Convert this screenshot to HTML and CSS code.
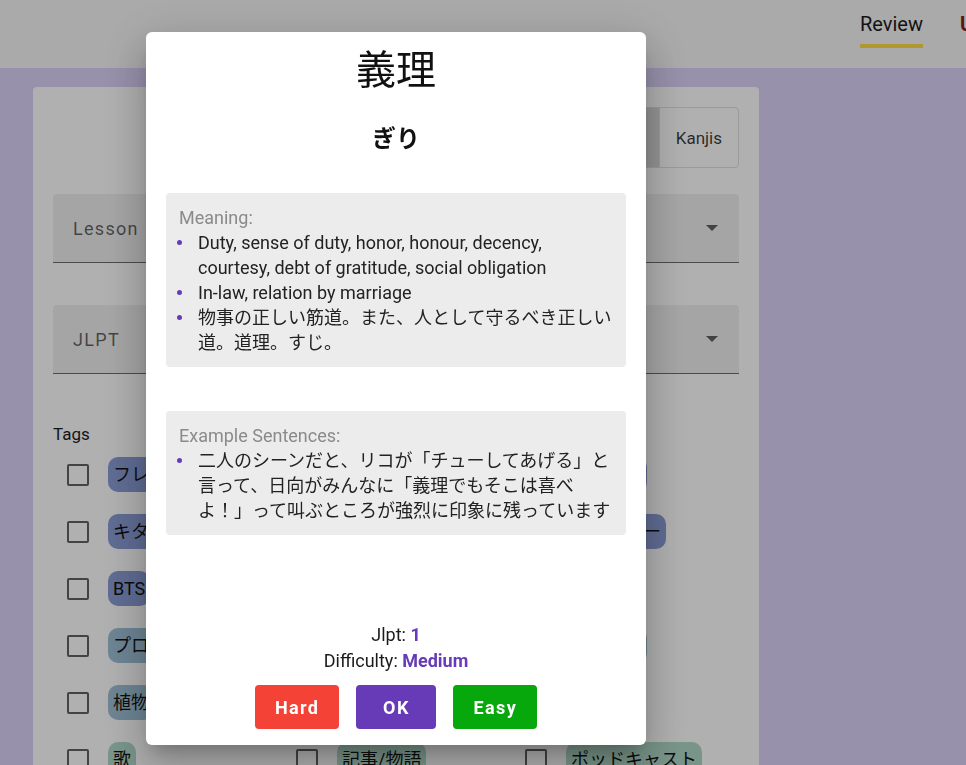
FILE: index.html
```html
<!DOCTYPE html>
<html lang="ja">
<head>
<meta charset="utf-8">
<title>Review</title>
<link rel="stylesheet" href="styles.css">
</head>
<body>
<header class="topbar">
  <nav class="tabs">
    <span class="tab tab-active">Review</span>
    <span class="tab tab-alt">Upload</span>
  </nav>
</header>

<main class="content">
  <section class="panel">
    <div class="toggle-row">
      <div class="toggle-group">
        <span class="toggle">All</span>
        <span class="toggle toggle-selected">Words</span>
        <span class="toggle">Kanjis</span>
      </div>
    </div>

    <div class="select select-first">
      <span class="select-label">Lesson</span>
      <span class="select-arrow"></span>
    </div>
    <div class="select select-second">
      <span class="select-label">JLPT</span>
      <span class="select-arrow"></span>
    </div>

    <div class="tags-title">Tags</div>
    <div class="tags-grid">
      <div class="tag"><span class="checkbox"></span><span class="chip chip-blue">フレーズ</span></div>
      <div class="tag"><span class="checkbox"></span><span class="chip chip-blue">アニメ</span></div>
      <div class="tag"><span class="checkbox"></span><span class="chip chip-blue">ニュース</span></div>

      <div class="tag"><span class="checkbox"></span><span class="chip chip-blue">キタニタツヤ</span></div>
      <div class="tag"><span class="checkbox"></span><span class="chip chip-blue">ドラマ</span></div>
      <div class="tag"><span class="checkbox"></span><span class="chip chip-blue">カレンダー</span></div>

      <div class="tag"><span class="checkbox"></span><span class="chip chip-blue">BTS</span></div>
      <div class="tag"><span class="checkbox"></span><span class="chip chip-blue">映画</span></div>
      <div class="tag"><span class="checkbox"></span><span class="chip chip-blue">音楽</span></div>

      <div class="tag"><span class="checkbox"></span><span class="chip chip-steel">プログラミング</span></div>
      <div class="tag"><span class="checkbox"></span><span class="chip chip-steel">料理</span></div>
      <div class="tag"><span class="checkbox"></span><span class="chip chip-steel">ゲーム系</span></div>

      <div class="tag"><span class="checkbox"></span><span class="chip chip-steel">植物</span></div>
      <div class="tag"><span class="checkbox"></span><span class="chip chip-steel">動物</span></div>
      <div class="tag"><span class="checkbox"></span><span class="chip chip-steel">旅行</span></div>

      <div class="tag"><span class="checkbox"></span><span class="chip chip-green">歌</span></div>
      <div class="tag"><span class="checkbox"></span><span class="chip chip-green">記事/物語</span></div>
      <div class="tag"><span class="checkbox"></span><span class="chip chip-green">ポッドキャスト</span></div>
    </div>
  </section>
</main>

<div class="backdrop"></div>

<div class="dialog">
  <div class="word">義理</div>
  <div class="reading">ぎり</div>

  <div class="info-box">
    <div class="box-title">Meaning:</div>
    <ul class="info-list">
      <li>Duty, sense of duty, honor, honour, decency, courtesy, debt of gratitude, social obligation</li>
      <li>In-law, relation by marriage</li>
      <li>物事の正しい筋道。また、人として守るべき正しい道。道理。すじ。</li>
    </ul>
  </div>

  <div class="info-box info-box-examples">
    <div class="box-title">Example Sentences:</div>
    <ul class="info-list">
      <li>二人のシーンだと、リコが「チューしてあげる」と言って、日向がみんなに「義理でもそこは喜べよ！」って叫ぶところが強烈に印象に残っています</li>
    </ul>
  </div>

  <div class="dialog-footer">
    <div class="meta">Jlpt: <b class="meta-value">1</b></div>
    <div class="meta">Difficulty: <b class="meta-value">Medium</b></div>
    <div class="actions">
      <button class="btn btn-hard">Hard</button>
      <button class="btn btn-ok">OK</button>
      <button class="btn btn-easy">Easy</button>
    </div>
  </div>
</div>
</body>
</html>
```

FILE: styles.css
```css
* {
  box-sizing: border-box;
}

html, body {
  margin: 0;
  padding: 0;
  height: 100%;
}

body {
  overflow: hidden;
  background: #dbd2f8;
  font-family: Roboto, "Noto Sans CJK JP", sans-serif;
  color: #1d1d1d;
}

/* ---------- top bar ---------- */
.topbar {
  height: 68px;
  background: #f6f6f6;
  padding-left: 860px;
}

.tabs {
  display: flex;
  gap: 37px;
  white-space: nowrap;
}

.tab {
  font-size: 20px;
  line-height: 24px;
  padding-top: 12px;
  padding-bottom: 8px;
  border-bottom: 4px solid transparent;
}

.tab-active {
  color: #1b1b1b;
  border-bottom-color: #ffdb45;
}

.tab-alt {
  color: #861f12;
  font-weight: 700;
}

/* ---------- main panel ---------- */
.content {
  padding: 19px 0 0 33px;
}

.panel {
  width: 726px;
  height: 720px;
  background: #ffffff;
  border-radius: 4px;
  padding: 20px;
}

.toggle-row {
  display: flex;
  justify-content: flex-end;
}

.toggle-group {
  display: flex;
  border: 1px solid rgba(0, 0, 0, 0.12);
  border-radius: 4px;
  overflow: hidden;
}

.toggle {
  height: 59px;
  display: flex;
  align-items: center;
  padding: 0 16px;
  font-size: 17px;
  color: rgba(0, 0, 0, 0.78);
}

.toggle + .toggle {
  border-left: 1px solid rgba(0, 0, 0, 0.12);
}

.toggle-selected {
  background: rgba(0, 0, 0, 0.16);
}

.select {
  height: 69px;
  background: rgba(0, 0, 0, 0.06);
  border-radius: 4px 4px 0 0;
  border-bottom: 1px solid rgba(0, 0, 0, 0.55);
  display: flex;
  align-items: center;
  justify-content: space-between;
  padding: 0 20px 0 20px;
}

.select-first {
  margin-top: 26px;
}

.select-second {
  margin-top: 42px;
}

.select-label {
  font-size: 18px;
  letter-spacing: 1.3px;
  color: rgba(0, 0, 0, 0.6);
}

.select-arrow {
  width: 0;
  height: 0;
  border-left: 6px solid transparent;
  border-right: 6px solid transparent;
  border-top: 6px solid rgba(0, 0, 0, 0.6);
  margin-right: 1px;
}

.tags-title {
  margin-top: 48px;
  font-size: 17px;
  line-height: 24px;
  color: #1d1d1d;
}

.tags-grid {
  display: grid;
  grid-template-columns: repeat(3, 229px);
  grid-auto-rows: 57px;
}

.tag {
  display: flex;
  align-items: center;
  padding-left: 14px;
  gap: 19px;
  white-space: nowrap;
}

.checkbox {
  width: 22px;
  height: 22px;
  border: 2px solid rgba(0, 0, 0, 0.62);
  border-radius: 2px;
  flex: none;
}

.chip {
  height: 35px;
  line-height: 35px;
  padding: 0 5px;
  border-radius: 10px;
  font-size: 18px;
  font-family: Roboto, "Noto Sans CJK JP", sans-serif;
  color: #111;
}

.chip-blue {
  background: #8a9dd6;
}

.chip-steel {
  background: #9fc0d6;
}

.chip-green {
  background: #b0d8c8;
}

/* ---------- modal ---------- */
.backdrop {
  position: fixed;
  inset: 0;
  background: rgba(0, 0, 0, 0.31);
}

.dialog {
  position: fixed;
  left: 146px;
  top: 32px;
  width: 500px;
  height: 713px;
  background: #ffffff;
  border-radius: 6px;
  box-shadow: 0 11px 15px -7px rgba(0, 0, 0, 0.2),
              0 24px 38px 3px rgba(0, 0, 0, 0.14),
              0 9px 46px 8px rgba(0, 0, 0, 0.12);
  display: flex;
  flex-direction: column;
  align-items: center;
  padding: 11px 20px 16px;
  color: #1b1b1b;
}

.word {
  font-family: "Noto Sans CJK JP", sans-serif;
  font-size: 40px;
  line-height: 48px;
  color: #111;
}

.reading {
  margin-top: 30px;
  font-family: "Noto Sans CJK JP", sans-serif;
  font-size: 24px;
  font-weight: 700;
  line-height: 32px;
  color: #111;
}

.info-box {
  margin-top: 40px;
  width: 460px;
  background: #ececec;
  border-radius: 4px;
  padding: 12px 12px 12px 13px;
  font-size: 18px;
  line-height: 25px;
  color: #222;
}

.info-box-examples {
  margin-top: 44px;
}

.box-title {
  color: #8a8a8a;
}

.info-list {
  list-style: none;
  margin: 0;
  padding: 0;
}

.info-list li {
  display: flex;
}

.info-list li::before {
  content: "";
  flex: none;
  width: 5px;
  height: 5px;
  border-radius: 50%;
  background: #673ab7;
  margin: 10px 16px 0 -2px;
}

.dialog-footer {
  margin-top: auto;
  display: flex;
  flex-direction: column;
  align-items: center;
}

.meta {
  font-size: 18px;
  line-height: 26px;
  color: #1b1b1b;
}

.meta-value {
  color: #673ab7;
  font-weight: 700;
}

.actions {
  display: flex;
  gap: 17px;
  margin-top: 11px;
}

.btn {
  height: 44px;
  min-width: 80px;
  padding: 0 20px;
  border: none;
  border-radius: 4px;
  color: #fff;
  font-family: Roboto, sans-serif;
  font-size: 18px;
  font-weight: 700;
  letter-spacing: 1.4px;
}

.btn-hard {
  background: #f44336;
}

.btn-ok {
  background: #673ab7;
}

.btn-easy {
  background: #06a80b;
}
```
